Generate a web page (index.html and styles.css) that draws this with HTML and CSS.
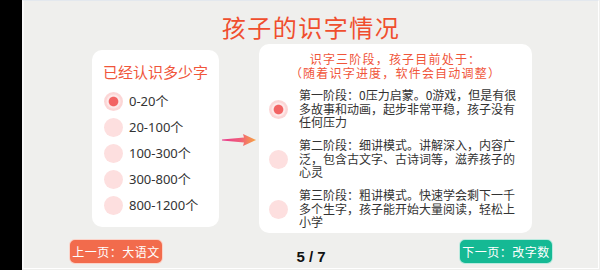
FILE: index.html
```html
<!DOCTYPE html>
<html lang="zh">
<head>
<meta charset="utf-8">
<title>孩子的识字情况</title>
<link rel="stylesheet" href="styles.css">
</head>
<body>
<div class="device">
  <div class="bezel"></div>
  <div class="screen">
    <h1 class="title">孩子的识字情况</h1>
    <div class="main">
      <section class="card card-left">
        <h2 class="card-title">已经认识多少字</h2>
        <ul class="options">
          <li class="option"><span class="radio radio-on"></span><span class="opt-text">0-20个</span></li>
          <li class="option"><span class="radio"></span><span class="opt-text">20-100个</span></li>
          <li class="option"><span class="radio"></span><span class="opt-text">100-300个</span></li>
          <li class="option"><span class="radio"></span><span class="opt-text">300-800个</span></li>
          <li class="option"><span class="radio"></span><span class="opt-text">800-1200个</span></li>
        </ul>
      </section>
      <div class="arrow">
        <svg width="34" height="14" viewBox="0 0 34 14">
          <defs>
            <linearGradient id="ag" x1="0" y1="0" x2="1" y2="0">
              <stop offset="0" stop-color="#e9388c"/>
              <stop offset="0.55" stop-color="#f0607a"/>
              <stop offset="1" stop-color="#f8a640"/>
            </linearGradient>
          </defs>
          <path d="M0 6.4 L22 4.6 L21 1 L34 7 L21 13 L22 9.4 L0 7.6 Z" fill="url(#ag)"/>
        </svg>
      </div>
      <section class="card card-right">
        <div class="stage-head">识字三阶段，孩子目前处于：
（随着识字进度，软件会自动调整）</div>
        <ul class="stages">
          <li class="stage"><span class="radio radio-on"></span><p class="stage-text">第一阶段：0压力启蒙。0游戏，但是有很多故事和动画，起步非常平稳，孩子没有任何压力</p></li>
          <li class="stage"><span class="radio"></span><p class="stage-text">第二阶段：细讲模式。讲解深入，内容广泛，包含古文字、古诗词等，滋养孩子的心灵</p></li>
          <li class="stage"><span class="radio"></span><p class="stage-text">第三阶段：粗讲模式。快速学会剩下一千多个生字，孩子能开始大量阅读，轻松上小学</p></li>
        </ul>
      </section>
    </div>
    <div class="footer">
      <button class="btn btn-prev">上一页：大语文</button>
      <div class="pager">5 / 7</div>
      <button class="btn btn-next">下一页：改字数</button>
    </div>
  </div>
</div>
</body>
</html>
```

FILE: styles.css
```css
* { box-sizing: border-box; }
html, body { margin: 0; padding: 0; }
body {
  width: 600px;
  height: 270px;
  background: #efefed;
  overflow: hidden;
  font-family: "Noto Sans CJK SC", "Noto Sans", sans-serif;
}
.device {
  display: flex;
  width: 600px;
  height: 270px;
}
.bezel {
  width: 22px;
  height: 270px;
  background: #000;
  flex: none;
}
.screen {
  width: 577px;
  height: 269px;
  background: #efefed;
  border-left: 2px solid #f9f9f9;
  border-top: 1px solid #e3e8ee;
  border-right: 1px solid #ffffff;
  border-bottom: 1px solid #ffffff;
  display: flex;
  flex-direction: column;
}
.title {
  margin: 0;
  padding-top: 11px;
  font-size: 24px;
  line-height: 30px;
  font-weight: 400;
  color: #f04e2e;
  text-align: center;
  letter-spacing: 1.5px;
}
.main {
  display: flex;
  align-items: flex-start;
  margin-top: 2px;
  height: 189px;
}
.card {
  background: #fff;
  border-radius: 10px;
  flex: none;
}
.card-left {
  width: 127px;
  height: 177px;
  margin-left: 68px;
  margin-top: 6px;
  padding: 13px 0 9px 0;
}
.card-title {
  margin: 0;
  text-align: center;
  font-size: 15px;
  line-height: 18px;
  font-weight: 400;
  color: #f0553a;
}
.options {
  list-style: none;
  margin: 7px 0 0 0;
  padding: 0 0 0 12px;
}
.option {
  display: flex;
  align-items: center;
  height: 26px;
}
.radio {
  width: 19px;
  height: 19px;
  border-radius: 50%;
  background: #fddfdf;
  flex: none;
}
.radio-on {
  background: radial-gradient(circle, #f26464 0, #f26464 4.3px, #fde9e9 5.3px, #fde9e9 6.3px, #fcd6d6 7.5px);
}
.opt-text {
  margin-left: 6px;
  font-family: "Noto Sans", "Noto Sans CJK SC", sans-serif;
  font-size: 13px;
  color: #333;
  line-height: 16px;
}
.arrow {
  width: 40px;
  flex: none;
  padding-left: 3px;
  margin-top: 89px;
  height: 14px;
}
.arrow svg { display: block; }
.card-right {
  width: 273px;
  height: 189px;
  padding: 8px 14px 5px 10px;
}
.stage-head {
  text-align: center;
  white-space: pre-line;
  font-size: 12px;
  line-height: 13.5px;
  letter-spacing: 1.2px;
  color: #f0553a;
  margin-right: -4px;
}
.stages {
  list-style: none;
  margin: 9px 0 0 0;
  padding: 0;
}
.stage {
  display: flex;
  align-items: center;
  height: 41px;
  margin-bottom: 9px;
}
.stage .radio { margin-top: 1px; }
.stage-text {
  margin: 0 0 0 11px;
  width: 219px;
  font-size: 12px;
  line-height: 13.5px;
  color: #333;
}
.footer {
  display: grid;
  grid-template-columns: 1fr auto 1fr;
  align-items: start;
  margin-top: 6px;
  padding: 0 45px;
}
.btn {
  width: 94px;
  height: 25px;
  border-radius: 6px;
  border: 1px solid rgba(255,255,255,0.7);
  color: #fff;
  font-family: "Noto Sans CJK SC", sans-serif;
  font-size: 12px;
  letter-spacing: 0.5px;
  padding: 0;
  line-height: 23px;
}
.btn-prev {
  background: #f26b4c;
  justify-self: start;
}
.btn-next {
  background: #15b994;
  justify-self: end;
}
.pager {
  padding-top: 10px;
  font-family: "Liberation Sans", Arial, sans-serif;
  font-weight: 700;
  font-size: 15px;
  line-height: 16px;
  color: #111;
}
```
